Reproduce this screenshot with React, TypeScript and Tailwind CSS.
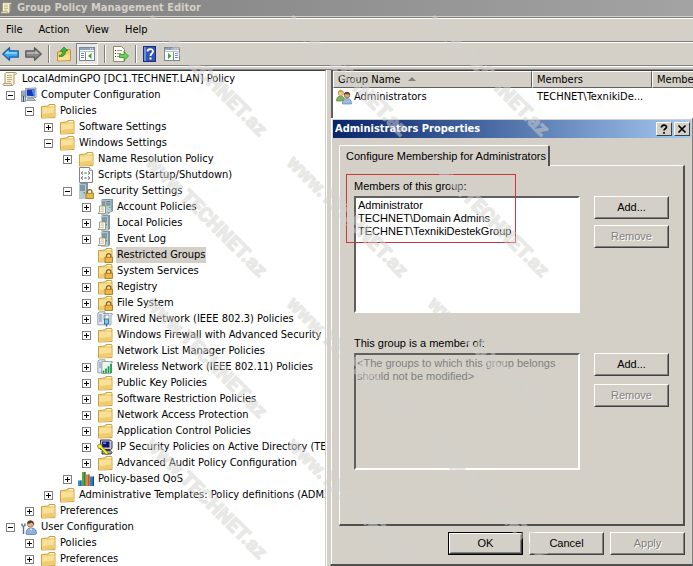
import { useState } from "react";
import type { ReactNode } from "react";

type IconName =
  | "folder" | "folderLock" | "scroll" | "computer" | "script" | "serverLock" | "servers"
  | "serverDoc" | "wired" | "wireless" | "ipsec" | "qos" | "user";

type Node = { depth: number; icon: IconName; label: string; mark?: "+" | "-" };

const NODES: Node[] = [
  { depth: 0, icon: "computer", label: "Computer Configuration", mark: "-" },
  { depth: 1, icon: "folder", label: "Policies", mark: "-" },
  { depth: 2, icon: "folder", label: "Software Settings", mark: "+" },
  { depth: 2, icon: "folder", label: "Windows Settings", mark: "-" },
  { depth: 3, icon: "folder", label: "Name Resolution Policy", mark: "+" },
  { depth: 3, icon: "script", label: "Scripts (Startup/Shutdown)" },
  { depth: 3, icon: "serverLock", label: "Security Settings", mark: "-" },
  { depth: 4, icon: "servers", label: "Account Policies", mark: "+" },
  { depth: 4, icon: "serverDoc", label: "Local Policies", mark: "+" },
  { depth: 4, icon: "serverDoc", label: "Event Log", mark: "+" },
  { depth: 4, icon: "folderLock", label: "Restricted Groups" },
  { depth: 4, icon: "folderLock", label: "System Services", mark: "+" },
  { depth: 4, icon: "folderLock", label: "Registry", mark: "+" },
  { depth: 4, icon: "folderLock", label: "File System", mark: "+" },
  { depth: 4, icon: "wired", label: "Wired Network (IEEE 802.3) Policies", mark: "+" },
  { depth: 4, icon: "folder", label: "Windows Firewall with Advanced Security", mark: "+" },
  { depth: 4, icon: "folder", label: "Network List Manager Policies" },
  { depth: 4, icon: "wireless", label: "Wireless Network (IEEE 802.11) Policies", mark: "+" },
  { depth: 4, icon: "folder", label: "Public Key Policies", mark: "+" },
  { depth: 4, icon: "folder", label: "Software Restriction Policies", mark: "+" },
  { depth: 4, icon: "folder", label: "Network Access Protection", mark: "+" },
  { depth: 4, icon: "folder", label: "Application Control Policies", mark: "+" },
  { depth: 4, icon: "ipsec", label: "IP Security Policies on Active Directory (TEC", mark: "+" },
  { depth: 4, icon: "folder", label: "Advanced Audit Policy Configuration", mark: "+" },
  { depth: 3, icon: "qos", label: "Policy-based QoS", mark: "+" },
  { depth: 2, icon: "folder", label: "Administrative Templates: Policy definitions (ADMX f", mark: "+" },
  { depth: 1, icon: "folder", label: "Preferences", mark: "+" },
  { depth: 0, icon: "user", label: "User Configuration", mark: "-" },
  { depth: 1, icon: "folder", label: "Policies", mark: "+" },
  { depth: 1, icon: "folder", label: "Preferences", mark: "+" },
];

const INDENT = ["pl-[6px]", "pl-[25px]", "pl-[44px]", "pl-[63px]", "pl-[82px]"];

/* ── Icon pieces ── */
const Folder = () => (
  <>
    <path d="M1.5 3.5 8 3 9 1.5h5.5l.5 1v12l-13.5.5z" fill="#f3d47e" stroke="#cfa146" />
    <path d="M2.2 5.5 14.4 4.8v9.3L2.2 14.5z" fill="#fae19a" />
    <path d="M2.2 11 14.4 9.5v4.6L2.2 14.5z" fill="#f0cc70" />
    <path d="M10 2.6h4" stroke="#fffbe6" />
  </>
);

const Lock = () => (
  <>
    <path d="M9.5 11V8.8a2.2 2.2 0 0 1 4.4 0V11" fill="none" stroke="#8b6a1c" strokeWidth="1.3" />
    <rect x="8" y="10.2" width="7.6" height="5.4" fill="#e3a52a" stroke="#9a6a10" strokeWidth=".7" />
    <path d="M8.5 11.8h6.6M8.5 13.8h6.6" stroke="#f8da7c" strokeWidth=".7" />
  </>
);

const Server = () => (
  <>
    <path d="M4 1 6 0h7v14l-2 1.5H4z" fill="#7d97a6" />
    <rect x="4" y="1.2" width="7" height="14.3" fill="#b7cbd4" />
    <path d="M5 3h5M5 5h5M5 7h5" stroke="#4d6470" />
    <rect x="8.5" y="9" width="1.5" height="1.5" fill="#3fae49" />
  </>
);

const Sheet = () => (
  <>
    <path d="M2.5 7h6v7.5H.8L2.5 13z" fill="#fffdf2" stroke="#8d8868" strokeWidth=".8" />
    <path d="M3.8 9h3.4M3.8 10.8h3.4M3.5 12.6h3.4" stroke="#b5b08c" strokeWidth=".8" />
  </>
);

const ICONS: Record<IconName, ReactNode> = {
  folder: <Folder />,
  folderLock: <><Folder /><Lock /></>,
  scroll: (
    <>
      <path d="M4 1.5h9.5c1.2 0 1.2 2 0 2H12v9c0 1.5-1 2-2 2H2c-1.2 0-1.5-1.8 0-2h1v-10z" fill="#f8f1da" stroke="#9d8d62" strokeWidth=".9" />
      <path d="M5 4.5h5M5 6.5h5M5 8.5h5M5 10.5h4" stroke="#b9a978" strokeWidth=".9" />
      <path d="M3 12.5h6.2c0 1 .4 1.6 1 1.9" fill="none" stroke="#9d8d62" strokeWidth=".8" />
      <path d="M12.2 2.2v10.2" stroke="#d8c796" strokeWidth=".8" />
    </>
  ),
  computer: (
    <>
      <path d="M.5 4h4v10.5h-4z" fill="#c6d0d8" stroke="#6b7c8c" strokeWidth=".8" />
      <path d="M1.2 6h2.6M1.2 8h2.6" stroke="#4e6072" strokeWidth=".8" />
      <path d="M4.5 1.5 15 1v9.5L4.5 10z" fill="#dfe5ea" stroke="#75818c" strokeWidth=".8" />
      <path d="M5.7 2.6 14 2.2v7L5.7 8.8z" fill="#1637b5" />
      <path d="M10.5 2.4 14 2.2v7l-1.5-.1z" fill="#4d8bf0" />
      <path d="M7 11h5l2.5 2.5H5.5z" fill="#b8c2ca" stroke="#75818c" strokeWidth=".7" />
      <path d="M2.5 9v5.5M1.5 8.8l1 1 1-1" stroke="#274b85" fill="none" />
    </>
  ),
  script: (
    <>
      <path d="M1.5.5h10l3 3v12h-13z" fill="#fff" stroke="#7e858e" />
      <path d="M11.5.5v3h3" fill="#dfe4ea" stroke="#7e858e" strokeWidth=".8" />
      <path d="M5 4.5 3.2 6 5 7.5M10 4.5 11.8 6 10 7.5M5 9.5 3.2 11 5 12.5M10 9.5l1.8 1.5-1.8 1.5" fill="none" stroke="#3b4552" strokeWidth=".9" />
      <path d="M6.3 6h2.4M6.3 11h2.4" stroke="#3b4552" strokeWidth=".9" />
    </>
  ),
  serverLock: <><g transform="translate(-3 0)"><Server /></g><Lock /></>,
  servers: (
    <>
      <Server />
      <g transform="translate(5 0) scale(.85 .85)"><Server /></g>
      <Sheet />
    </>
  ),
  serverDoc: <><Server /><Sheet /></>,
  wired: (
    <>
      <path d="M.8 2 3 .8h5v13H.8z" fill="#dfe8ee" stroke="#7d8f9c" strokeWidth=".8" />
      <path d="M2 4h3M2 6h3M2 8h3M2 10h3" stroke="#5d7686" strokeWidth=".8" />
      <path d="M6 2.5h9c.8 0 .8 1.4 0 1.4h-1V13c0 1.6-2 1.6-2 0V4H7v5" fill="#f4f8fb" stroke="#7d8f9c" strokeWidth=".8" />
      <rect x="7.5" y="8" width="4" height="5" fill="#86c5e8" stroke="#27648e" strokeWidth=".8" />
      <path d="M9.5 13v2.5" stroke="#1d6fae" strokeWidth="1.6" />
    </>
  ),
  wireless: (
    <>
      <path d="M.8 2 3 .8h5v13H.8z" fill="#dfe8ee" stroke="#7d8f9c" strokeWidth=".8" />
      <path d="M5 2.5h10.3v1.3H14v10.7H4.5z" fill="#eef5ee" stroke="#7d8f9c" strokeWidth=".8" />
      <path d="M2 4h2M2 6h2M2 8h2" stroke="#5d7686" strokeWidth=".8" />
      <path d="M6.5 14v-2.5M9 14V9.5M11.5 14V7.2M14 14V5" stroke="#17994a" strokeWidth="1.7" />
    </>
  ),
  ipsec: (
    <>
      <path d="M3.5 1h10l1.5 1.5v7l-1.5 1h-10z" fill="#c9c9d2" stroke="#222" strokeWidth=".9" />
      <rect x="5" y="2.5" width="7.5" height="6" fill="#12127c" />
      <path d="M6 3.5h3v1.5H6z" fill="#7d8ce8" />
      <path d="M5 11.5h8.5l1.5 2-1 1.5H5z" fill="#a8a8b4" stroke="#222" strokeWidth=".9" />
      <path d="M.5 6.5 3 5l2 1 .3 2L11 13.5v2H9L3.6 9.6 1.5 9.4z" fill="#f7ee25" stroke="#6b6500" strokeWidth=".7" />
    </>
  ),
  qos: (
    <>
      <path d="M0 9.5h3.5V15H0z" fill="#2f8fc9" /><path d="M2.4 9.5h1.1V15H2.4z" fill="#17567f" />
      <path d="M4 1h3.5v14H4z" fill="#5aa544" /><path d="M6.4 1h1.1v14H6.4z" fill="#2c6523" />
      <path d="M8 3.5h3.5V15H8z" fill="#e8804b" /><path d="M10.4 3.5h1.1V15h-1.1z" fill="#94441f" />
      <path d="M12 5.5h4V15h-4z" fill="#2f7fc0" /><path d="M14.9 5.5H16V15h-1.1z" fill="#164a78" />
    </>
  ),
  user: (
    <>
      <path d="M5 15c0-4 1.5-6 5-6s5.500 2 5.500 5c0 1-1 1.500-2 1.500H6z" fill="#8fb1de" stroke="#4d74a8" strokeWidth=".7" />
      <circle cx="9.5" cy="5" r="3.3" fill="#e0ae84" stroke="#8e6746" strokeWidth=".6" />
      <path d="M6.2 4.6C6.2.5 13 .3 13.2 6c-1-.6-1.8-1.6-2.2-2.4-1.4 1-3 1.2-4.8 1z" fill="#4c3a28" />
      <path d="M9 9.5 10 12l1-2.5z" fill="#fff" />
      <path d="M2.5 7.5V15M1 4.5v2l1.5 1 1.5-1v-2" fill="none" stroke="#5f6f80" strokeWidth="1.4" />
    </>
  ),
};

function Icon({ name, className = "w-4 h-4" }: { name: IconName; className?: string }) {
  return <svg viewBox="0 0 16 16" className={`shrink-0 ${className}`} aria-hidden="true">{ICONS[name]}</svg>;
}

const UsersIcon = () => (
  <svg viewBox="0 0 16 16" className="w-4 h-4 shrink-0" aria-hidden="true">
    <path d="M.5 12c0-3.5 1.5-5 4-5s4 1.5 4 5z" fill="#7fb35c" stroke="#4b7a31" strokeWidth=".6" />
    <circle cx="4.8" cy="4" r="2.7" fill="#efcf9c" stroke="#a5803e" strokeWidth=".6" />
    <path d="M2 4C2 .6 7.5.6 7.6 3.8 6 3.4 4 3 2 4z" fill="#d3a33c" />
    <path d="M6.5 15c0-4 1.6-5.5 4.6-5.5s4.4 1.8 4.4 5.5z" fill="#9cbbe3" stroke="#4d74a8" strokeWidth=".6" />
    <circle cx="11" cy="6" r="2.9" fill="#d99f75" stroke="#7d5133" strokeWidth=".6" />
    <path d="M8 5.8C8 2 14 2 14 5.8c-2-.2-4-1.6-6 0z" fill="#5a4029" />
  </svg>
);

const Arrow = ({ fill, stroke, shine, flip }: { fill: string; stroke: string; shine: string; flip?: boolean }) => (
  <svg viewBox="0 0 17 14" className={`w-[17px] h-[14px] ${flip ? "-scale-x-100" : ""}`} aria-hidden="true">
    <path d="M.8 7 7.5.8v3h8.7v6.4H7.5v3z" fill={fill} stroke={stroke} strokeWidth="1.3" strokeLinejoin="round" />
    <path d="M3 6.5 6.5 3.2v2h8.6v1.500H3z" fill={shine} />
  </svg>
);

/* console window with a side pane, arrow on either side */
const PaneIcon = ({ mirror }: { mirror?: boolean }) => (
  <svg viewBox="0 0 16 14" className="w-4 h-3.5" aria-hidden="true">
    <rect x=".5" y=".5" width="15" height="13" fill="#fff" stroke="#7b8796" />
    <path d="M1 1h14v2H1z" fill="#8fa3bf" />
    <path d="M11 2h1M13 2h1" stroke="#fff" />
    <path d="M1 4.5h14" stroke="#b5bfcc" />
    {mirror ? (
      <>
        <path d="M9.5 5v8.5" stroke="#7b8796" />
        <path d="M11 6.5h3M11 8.5h3M11 10.5h3" stroke="#5f86b8" />
        <path d="M4 6v6l3.5-3z" fill="#35a835" />
      </>
    ) : (
      <>
        <path d="M6.5 5v8.5" stroke="#7b8796" />
        <path d="M2 6.5h3M2 8.5h3M2 10.5h3" stroke="#5f86b8" />
        <path d="M12.5 6v6L9 9z" fill="#35a835" />
      </>
    )}
  </svg>
);

const FolderUp = () => (
  <svg viewBox="0 0 16 16" className="w-4 h-4" aria-hidden="true">
    <path d="M1.5 6 7 5l1-1.5h6l.5 1v10l-13 .5z" fill="#f3cf72" stroke="#c29336" />
    <path d="M2.2 10 14 8.5v5.6l-11.8.4z" fill="#fadf92" />
    <path d="M3 9.5c2.5 0 3.5-1.5 3.5-4.5H4.3L8 1l3.7 4H9.5c0 4-2 6-6.5 5.5z" fill="#3fb83a" stroke="#1f7a1d" strokeWidth=".7" />
  </svg>
);

const ExportIcon = () => (
  <svg viewBox="0 0 17 16" className="w-[17px] h-4" aria-hidden="true">
    <path d="M1.5.5h8l3 3v12h-11z" fill="#fffdf0" stroke="#8f8a70" />
    <path d="M3 4.5h1M3 7.5h1M3 10.5h1" stroke="#333" />
    <path d="M5 4.5h5M5 7.5h4M5 10.5h4" stroke="#9c987e" />
    <path d="M7.5 8.5H12v-3l4.5 4.5-4.5 4.5v-3H7.5z" fill="#6fce5c" stroke="#2f9127" strokeWidth=".8" />
  </svg>
);

const HelpIcon = () => (
  <svg viewBox="0 0 13 16" className="w-[13px] h-4" aria-hidden="true">
    <rect x=".5" y=".5" width="12" height="15" fill="#2f55b8" stroke="#1b2f78" />
    <path d="M1 1h2v14H1z" fill="#6d8de0" />
    <path d="M4.5 5.5c0-3.2 5.5-3.2 5.5-.2 0 2.2-2.500 2.200-2.500 4.700" fill="none" stroke="#fff" strokeWidth="1.8" />
    <rect x="6.5" y="11.5" width="2" height="2" fill="#fff" />
  </svg>
);

const Separator = () => <span className="w-0.5 h-[18px] border-l border-l-[#808080] border-r border-r-white" />;

/* ── Raised 3D push button ── */
function PushButton({ children, disabled, primary }: { children: ReactNode; disabled?: boolean; primary?: boolean }) {
  return (
    <button
      disabled={disabled}
      className={`w-[75px] h-[23px] shrink-0 text-center ${primary ? "border border-black" : ""}`}
    >
      <span className="flex w-full h-full items-center justify-center border border-t-white border-l-white border-r-[#404040] border-b-[#404040]">
        <span className={`flex w-full h-full items-center justify-center border border-transparent border-r-[#808080] border-b-[#808080] ${disabled ? "text-[#808080] [text-shadow:1px_1px_0_#fff]" : ""}`}>
          {children}
        </span>
      </span>
    </button>
  );
}

function CaptionButton({ label, children }: { label: string; children: ReactNode }) {
  return (
    <button
      aria-label={label}
      className="flex w-4 h-3.5 items-center justify-center bg-[#d4d0c8] border border-t-white border-l-white border-r-[#404040] border-b-[#404040]"
    >
      <svg viewBox="0 0 10 10" className="w-2.5 h-2.5" fill="none" stroke="#000" strokeWidth="1.7" aria-hidden="true">{children}</svg>
    </button>
  );
}

const SUNKEN = "border-2 border-t-[#606060] border-l-[#606060] border-r-white border-b-white";

function PolicyTree() {
  const [selected, setSelected] = useState(10);

  return (
    <nav className="w-[326px] shrink-0 overflow-hidden bg-white border-t border-t-[#404040] border-r border-r-[#d4d0c8]">
      <div className="flex items-center h-4 pl-0.5 whitespace-nowrap">
        <Icon name="scroll" />
        <span className="ml-[3px] px-px">LocalAdminGPO [DC1.TECHNET.LAN] Policy</span>
      </div>
      <ul>
        {NODES.map((n, i) => (
          <li key={i} className={`flex items-center h-4 whitespace-nowrap ${INDENT[n.depth]}`}>
            {n.mark ? (
              <button aria-label={n.mark === "+" ? "Expand" : "Collapse"} className="w-[9px] h-[9px] shrink-0">
                <svg viewBox="0 0 9 9" className="w-full h-full" shapeRendering="crispEdges">
                  <rect x=".5" y=".5" width="8" height="8" fill="#fff" stroke="#808080" />
                  <path d={n.mark === "+" ? "M2 4.5h5M4.5 2v5" : "M2 4.5h5"} stroke="#000" />
                </svg>
              </button>
            ) : (
              <span className="w-[9px] shrink-0" />
            )}
            <span className="ml-1.5 flex"><Icon name={n.icon} /></span>
            <button
              onClick={() => setSelected(i)}
              className={`ml-[3px] h-4 px-px leading-4 ${selected === i ? "bg-[#d4d0c8]" : ""}`}
            >
              {n.label}
            </button>
          </li>
        ))}
      </ul>
    </nav>
  );
}

const TH = "h-[17px] px-1 text-left font-normal bg-[#d4d0c8] border border-t-white border-l-white border-r-[#606060] border-b-[#606060]";

function GroupList() {
  return (
    <div className="ml-px h-12 shrink-0 overflow-hidden bg-white border-t border-t-[#404040] border-l-2 border-l-[#606060]">
      <table className="w-[480px] table-fixed border-separate border-spacing-0 leading-[14px] whitespace-nowrap">
        <thead>
          <tr>
            <th className={`w-[199px] ${TH}`}>
              Group Name
              <svg viewBox="0 0 8 4" className="inline-block ml-2 mb-0.5 w-2 h-1" aria-hidden="true"><path d="M4 0 8 4H0z" fill="#808080" /></svg>
            </th>
            <th className={`w-[120px] ${TH}`}>Members</th>
            <th className={TH}>Member</th>
          </tr>
        </thead>
        <tbody>
          <tr>
            <td className="h-[18px] pl-[3px]">
              <span className="flex items-center gap-0.5"><UsersIcon />Administrators</span>
            </td>
            <td className="pl-[5px]">TECHNET\TexnikiDe...</td>
            <td />
          </tr>
        </tbody>
      </table>
    </div>
  );
}

function PropertiesDialog() {
  return (
    <section className="flex-1 bg-[#d4d0c8] border-l border-l-[#d4d0c8] border-r border-r-[#808080] border-b-2 border-b-[#505050]">
      <div className="h-full px-px pt-px border-t border-t-white border-l border-l-white">
        {/* caption bar */}
        <div className="flex items-center h-[18px] pl-0.5 pr-px gap-0.5 bg-linear-to-r from-[#0a246a] to-[#a6caf0] text-white font-bold">
          <h2 className="flex-1">Administrators Properties</h2>
          <CaptionButton label="Help">
            <path d="M2.5 3.5c0-3 5-3 5-.5C7.500 4.700 5 4.700 5 6.500M5 8v1.700" />
          </CaptionButton>
          <CaptionButton label="Close"><path d="M1.5 1.5l7 7M8.5 1.5l-7 7" /></CaptionButton>
        </div>

        <div className="px-1.5 pt-[7px] font-['Liberation_Sans',sans-serif]">
          <div role="tablist" className="flex">
            <button role="tab" aria-selected="true" className="relative z-10 -mb-px h-[21px] pl-1.5 pr-0.5 bg-[#d4d0c8] rounded-t-xs border-t border-t-white border-l border-l-white border-r-2 border-r-[#505050]">
              Configure Membership for Administrators
            </button>
          </div>

          <div className="px-3.5 pt-3 pb-[54px] border-t border-t-white border-l border-l-white border-r-2 border-r-[#505050] border-b-2 border-b-[#505050]">
            <div className="relative flex gap-3.5">
              {/* highlight around the member names */}
              <div className="absolute -left-2 -top-1 w-[170px] h-[69px] border border-[#d0343c] pointer-events-none" />
              <div className="flex-1">
                <label htmlFor="members" className="block h-[18px] leading-4">Members of this group:</label>
                <select id="members" size={8} className={`block w-full h-[117px] pt-px overflow-hidden bg-white outline-none ${SUNKEN}`}>
                  <option className="p-0 pl-0.5 min-h-0 h-[13px] leading-[13px]">Administrator</option>
                  <option className="p-0 pl-0.5 min-h-0 h-[13px] leading-[13px]">TECHNET\Domain Admins</option>
                  <option className="p-0 pl-0.5 min-h-0 h-[13px] leading-[13px]">TECHNET\TexnikiDestekGroup</option>
                </select>
              </div>
              <div className="flex flex-col gap-1.5 pt-[18px]">
                <PushButton>Add...</PushButton>
                <PushButton disabled>Remove</PushButton>
              </div>
            </div>

            <div className="flex gap-3.5 pt-[22px]">
              <div className="flex-1">
                <label htmlFor="memberOf" className="block h-[18px] leading-4">This group is a member of:</label>
                <textarea
                  id="memberOf"
                  disabled
                  defaultValue={"<The groups to which this group belongs should not be modified>"}
                  className={`block w-full h-[117px] pl-px pt-0.5 resize-none leading-[13px] text-[#808080] ${SUNKEN}`}
                />
              </div>
              <div className="flex flex-col gap-2 pt-[18px]">
                <PushButton>Add...</PushButton>
                <PushButton disabled>Remove</PushButton>
              </div>
            </div>
          </div>

          <div className="flex justify-end gap-1.5 pt-1.5">
            <PushButton primary>OK</PushButton>
            <PushButton>Cancel</PushButton>
            <PushButton disabled>Apply</PushButton>
          </div>
        </div>
      </div>
    </section>
  );
}

export default function App() {
  return (
    <div className="relative flex flex-col h-screen overflow-hidden bg-[#d4d0c8] text-black text-[11px] font-['DejaVu_Sans_Condensed','DejaVu_Sans',sans-serif]">
      {/* ── Title bar ── */}
      <header className="flex shrink-0 items-center gap-1 h-4 bg-linear-to-r from-[#808080] to-[#a3a3a3] text-[#d4d0c8] font-bold">
        <Icon name="scroll" className="w-[13px] h-[14px]" />
        <h1>Group Policy Management Editor</h1>
      </header>

      {/* ── Menu ── */}
      <div className="mt-px flex shrink-0 items-center gap-4 h-6 pt-px px-1.5 border-t border-t-[#808080] shadow-[inset_0_1px_0_#fff]">
        {["File", "Action", "View", "Help"].map((m) => <button key={m}>{m}</button>)}
      </div>

      {/* ── Toolbar ── */}
      <div className="flex shrink-0 items-center h-6 pt-px pl-0.5 border-t border-t-[#808080] shadow-[inset_0_1px_0_#fff]">
        <button aria-label="Back"><Arrow fill="#3fa7ea" stroke="#1c62a8" shine="#9fdcff" /></button>
        <button aria-label="Forward" className="ml-1.5"><Arrow fill="#8a8a8a" stroke="#5c5c5c" shine="#bdbdbd" flip /></button>
        <span className="mx-1.5 flex"><Separator /></span>
        <button aria-label="Up one level"><FolderUp /></button>
        <button
          aria-label="Show console tree"
          className="ml-1 mr-1.5 flex w-[22px] h-[22px] items-center justify-center bg-[#e9e7e3] border border-t-[#808080] border-l-[#808080] border-r-white border-b-white"
        >
          <PaneIcon />
        </button>
        <Separator />
        <button aria-label="Export list" className="mx-1.5"><ExportIcon /></button>
        <Separator />
        <button aria-label="Help" className="ml-1.5 mr-2"><HelpIcon /></button>
        <button aria-label="Show action pane"><PaneIcon mirror /></button>
      </div>
      <div className="h-1 shrink-0 border-t border-t-[#808080] shadow-[inset_0_1px_0_#fff]" />

      {/* ── Console panes ── */}
      <main className="flex flex-1 min-h-0 border-t border-t-[#808080]">
        <PolicyTree />
        <div className="flex flex-1 flex-col min-w-0 pl-[3px] border-l border-l-white">
          <GroupList />
          <PropertiesDialog />
        </div>
      </main>

      {/* watermark tiles */}
      <div aria-hidden="true" className="absolute left-[136px] top-1 z-20 grid grid-cols-[repeat(3,141px)] auto-rows-[141px] place-items-center pointer-events-none">
        {Array.from({ length: 12 }, (_, i) => (
          <span key={i} className="rotate-45 whitespace-nowrap text-xl leading-none font-black text-[#d3d2ce] opacity-50 [-webkit-text-stroke:1px_#d3d2ce] font-[Roboto,sans-serif]">
            www.TECHNET.az
          </span>
        ))}
      </div>
    </div>
  );
}
